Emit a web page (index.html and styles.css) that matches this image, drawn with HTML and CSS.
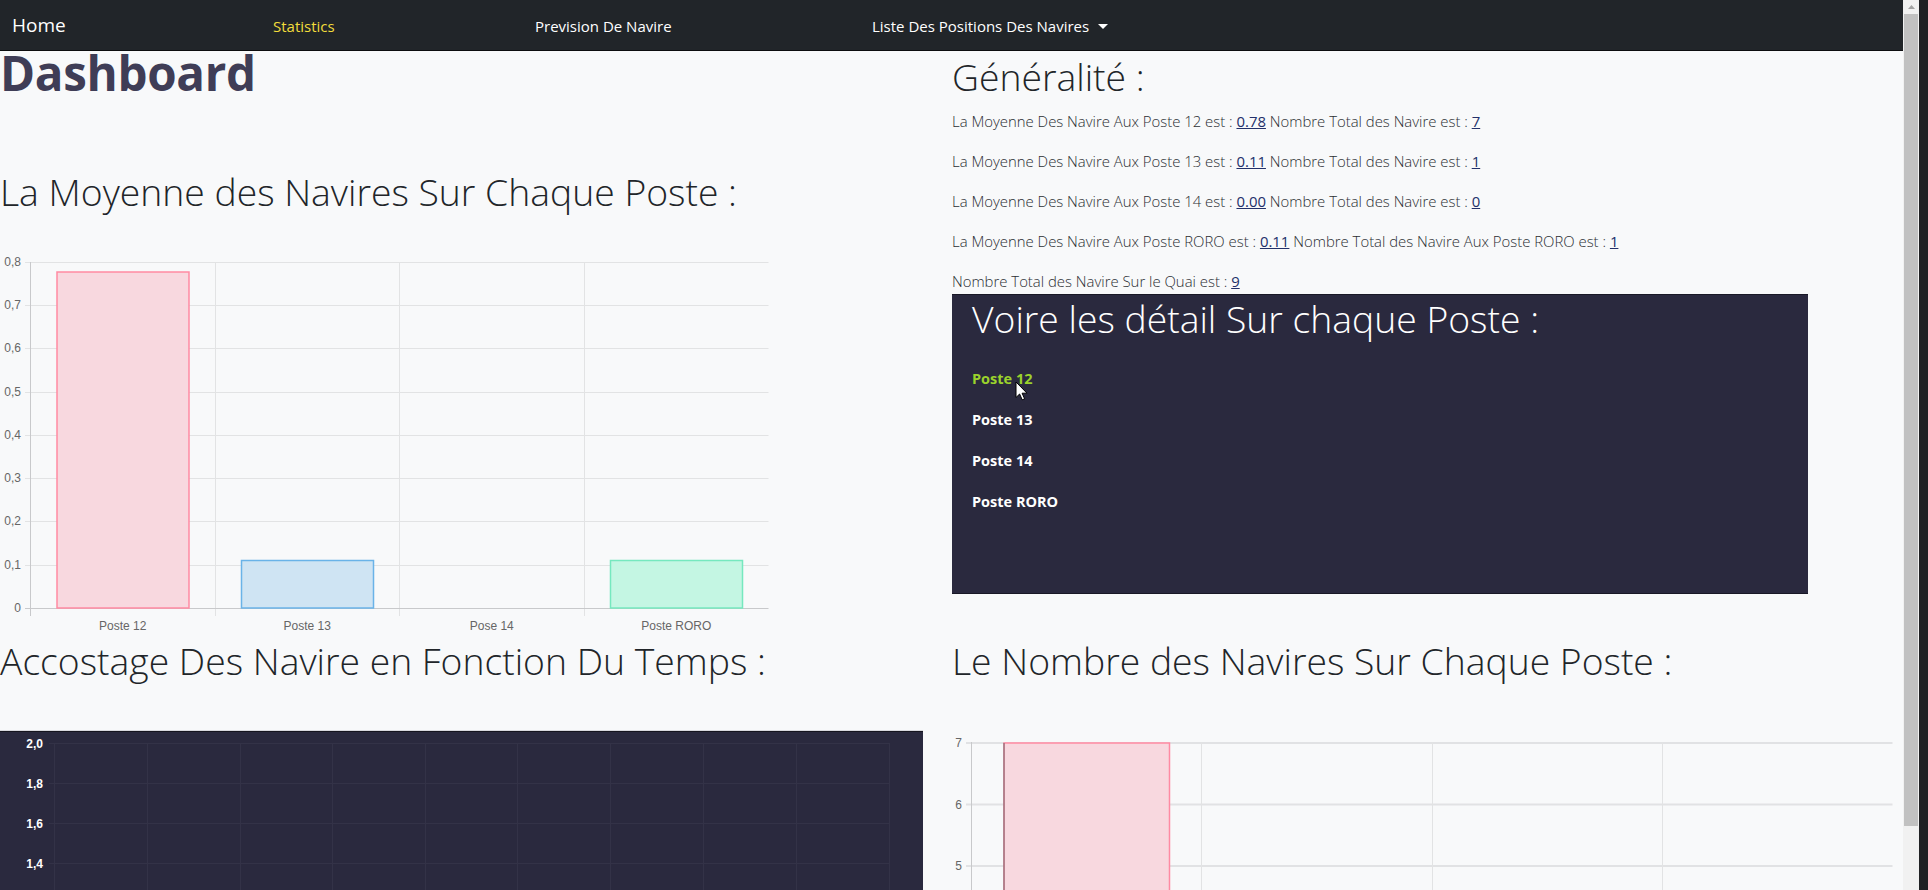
FILE: index.html
```html
<!DOCTYPE html>
<html lang="fr">
<head>
<meta charset="utf-8">
<title>Dashboard</title>
<link rel="stylesheet" href="styles.css">
</head>
<body>
<div class="window">
  <div class="page">
    <nav class="navbar">
      <a class="brand" href="#">Home</a>
      <a class="nav-link link-stats" href="#">Statistics</a>
      <a class="nav-link link-prev" href="#">Prevision De Navire</a>
      <a class="nav-link dropdown-toggle" href="#">Liste Des Positions Des Navires</a>
    </nav>

    <main class="dashboard">
      <section class="cell">
        <h1 class="page-title">Dashboard</h1>
        <h2 class="section-title moyenne-title">La Moyenne des Navires Sur Chaque Poste :</h2>
        <svg class="chart chart-moyenne" width="770" height="385" viewBox="0 0 770 385">
          <g class="grid">
            <line x1="25" y1="10.5" x2="768.5" y2="10.5"/>
            <line x1="25" y1="53.5" x2="768.5" y2="53.5"/>
            <line x1="25" y1="96.5" x2="768.5" y2="96.5"/>
            <line x1="25" y1="140.5" x2="768.5" y2="140.5"/>
            <line x1="25" y1="183.5" x2="768.5" y2="183.5"/>
            <line x1="25" y1="226.5" x2="768.5" y2="226.5"/>
            <line x1="25" y1="269.5" x2="768.5" y2="269.5"/>
            <line x1="25" y1="313.5" x2="768.5" y2="313.5"/>
            <line x1="215.5" y1="10" x2="215.5" y2="364"/>
            <line x1="399.5" y1="10" x2="399.5" y2="364"/>
            <line x1="584.5" y1="10" x2="584.5" y2="364"/>
          </g>
          <g class="axis">
            <line x1="25" y1="356.5" x2="768.5" y2="356.5"/>
            <line x1="30.5" y1="10" x2="30.5" y2="364"/>
          </g>
          <g class="ticks">
            <text x="21" y="14">0,8</text>
            <text x="21" y="57">0,7</text>
            <text x="21" y="100">0,6</text>
            <text x="21" y="144">0,5</text>
            <text x="21" y="187">0,4</text>
            <text x="21" y="230">0,3</text>
            <text x="21" y="273">0,2</text>
            <text x="21" y="317">0,1</text>
            <text x="21" y="360">0</text>
          </g>
          <rect class="bar bar-pink" x="57" y="20" width="132" height="336"/>
          <rect class="bar bar-blue" x="241.5" y="308.5" width="132" height="47.5"/>
          <rect class="bar bar-green" x="610.5" y="308.5" width="132" height="47.5"/>
          <g class="labels">
            <text x="122.75" y="378">Poste 12</text>
            <text x="307.25" y="378">Poste 13</text>
            <text x="491.75" y="378">Pose 14</text>
            <text x="676.25" y="378">Poste RORO</text>
          </g>
        </svg>
      </section>

      <section class="cell">
        <h2 class="section-title general-title">Généralité :</h2>
        <p class="stat">La Moyenne Des Navire Aux Poste 12 est : <a href="#">0.78</a> Nombre Total des Navire est : <a href="#">7</a></p>
        <p class="stat">La Moyenne Des Navire Aux Poste 13 est : <a href="#">0.11</a> Nombre Total des Navire est : <a href="#">1</a></p>
        <p class="stat">La Moyenne Des Navire Aux Poste 14 est : <a href="#">0.00</a> Nombre Total des Navire est : <a href="#">0</a></p>
        <p class="stat">La Moyenne Des Navire Aux Poste RORO est : <a href="#">0.11</a> Nombre Total des Navire Aux Poste RORO est : <a href="#">1</a></p>
        <p class="stat stat-last">Nombre Total des Navire Sur le Quai est : <a href="#">9</a></p>
        <div class="detail-box">
          <h2 class="section-title detail-title">Voire les détail Sur chaque Poste :</h2>
          <ul class="poste-list">
            <li><a class="poste-link is-hover" href="#">Poste 12</a></li>
            <li><a class="poste-link" href="#">Poste 13</a></li>
            <li><a class="poste-link" href="#">Poste 14</a></li>
            <li><a class="poste-link" href="#">Poste RORO</a></li>
          </ul>
          <svg class="cursor" width="14" height="21" viewBox="0 0 14 21">
            <path d="M1 1 L1 16.5 L4.6 13 L7.2 18.8 L9.6 17.8 L7.1 12.2 L12 12.2 Z" fill="#fff" stroke="#000" stroke-width="1" stroke-linejoin="round"/>
          </svg>
        </div>
      </section>

      <section class="cell">
        <h2 class="section-title bottom-title">Accostage Des Navire en Fonction Du Temps :</h2>
        <div class="dark-chart">
          <svg class="chart" width="923" height="170" viewBox="0 0 923 170">
            <g class="dark-grid">
              <line x1="49" y1="11.5" x2="889.5" y2="11.5"/>
              <line x1="49" y1="51.5" x2="889.5" y2="51.5"/>
              <line x1="49" y1="91.5" x2="889.5" y2="91.5"/>
              <line x1="49" y1="131.5" x2="889.5" y2="131.5"/>
              <line x1="54.5" y1="11" x2="54.5" y2="170"/>
              <line x1="147.5" y1="11" x2="147.5" y2="170"/>
              <line x1="240.5" y1="11" x2="240.5" y2="170"/>
              <line x1="332.5" y1="11" x2="332.5" y2="170"/>
              <line x1="425.5" y1="11" x2="425.5" y2="170"/>
              <line x1="517.5" y1="11" x2="517.5" y2="170"/>
              <line x1="610.5" y1="11" x2="610.5" y2="170"/>
              <line x1="703.5" y1="11" x2="703.5" y2="170"/>
              <line x1="796.5" y1="11" x2="796.5" y2="170"/>
              <line x1="889.5" y1="11" x2="889.5" y2="170"/>
            </g>
            <g class="dark-ticks">
              <text x="43" y="15.5">2,0</text>
              <text x="43" y="55.5">1,8</text>
              <text x="43" y="95.5">1,6</text>
              <text x="43" y="135.5">1,4</text>
            </g>
          </svg>
        </div>
      </section>

      <section class="cell">
        <h2 class="section-title bottom-title">Le Nombre des Navires Sur Chaque Poste :</h2>
        <svg class="chart chart-nombre" width="951" height="160" viewBox="0 0 951 160">
          <g class="grid-thick">
            <line x1="14" y1="12" x2="940.5" y2="12"/>
            <line x1="14" y1="73.5" x2="940.5" y2="73.5"/>
            <line x1="14" y1="135" x2="940.5" y2="135"/>
          </g>
          <g class="grid">
            <line x1="249.5" y1="11" x2="249.5" y2="160"/>
            <line x1="480.5" y1="11" x2="480.5" y2="160"/>
            <line x1="710.5" y1="11" x2="710.5" y2="160"/>
          </g>
          <g class="axis">
            <line x1="19.5" y1="11" x2="19.5" y2="160"/>
          </g>
          <rect class="bar bar-pink" x="52" y="12" width="165.5" height="160"/>
          <line class="bar-edge" x1="52" y1="12" x2="52" y2="160"/>
          <g class="ticks">
            <text x="10" y="16">7</text>
            <text x="10" y="77.5">6</text>
            <text x="10" y="139">5</text>
          </g>
        </svg>
      </section>
    </main>
  </div>
  <div class="scrollbar">
    <div class="scroll-arrow">
      <svg width="7" height="4" viewBox="0 0 7 4"><path d="M0 4 L3.5 0 L7 4 Z" fill="#a3a3a3"/></svg>
    </div>
    <div class="scroll-thumb"></div>
  </div>
  <div class="window-edge"></div>
</div>
</body>
</html>
```

FILE: styles.css
```css
* {
  box-sizing: border-box;
}

html,
body {
  margin: 0;
  padding: 0;
}

body {
  background: #f8f9fa;
  color: #212529;
  font-family: "Open Sans", "Noto Sans", sans-serif;
  overflow: hidden;
}

.window {
  display: flex;
  width: 1928px;
  height: 890px;
  overflow: hidden;
}

.page {
  flex: none;
  width: 1903px;
  height: 890px;
  overflow: hidden;
}

/* ---------- navbar ---------- */
.navbar {
  display: flex;
  align-items: center;
  height: 51px;
  background: #212529;
  border-bottom: 1px solid #0c0d0f;
}

.brand {
  flex: none;
  width: 273px;
  padding-left: 12px;
  font-size: 19px;
  color: #fff;
  text-decoration: none;
}

.nav-link {
  flex: none;
  font-size: 15px;
  color: #fff;
  text-decoration: none;
  padding-top: 1px;
}

.link-stats {
  width: 262px;
  color: #f3dd3b;
}

.link-prev {
  width: 337px;
}

.dropdown-toggle::after {
  content: "";
  display: inline-block;
  margin-left: 9px;
  vertical-align: 3px;
  border-top: 5px solid #fff;
  border-left: 5px solid transparent;
  border-right: 5px solid transparent;
}

/* ---------- layout ---------- */
.dashboard {
  display: grid;
  grid-template-columns: 952px 951px;
}

.cell {
  min-width: 0;
}

.page-title {
  margin: 0;
  font-size: 47.5px;
  font-weight: 700;
  line-height: 42px;
  color: #3f3d56;
  letter-spacing: -0.3px;
  padding-top: 1px;
}

.section-title {
  margin: 0;
  font-size: 37.3px;
  font-weight: 300;
  line-height: 48px;
  color: #212529;
  white-space: nowrap;
}

.moyenne-title {
  margin-top: 74px;
}

.chart {
  display: block;
}

.chart-moyenne {
  margin-top: 36px;
}

.general-title {
  margin: 2px 0 8px;
}

.stat {
  margin: 0 0 16px;
  font-size: 14.9px;
  font-weight: 300;
  line-height: 24px;
  color: #2b2e33;
  white-space: nowrap;
}

.stat a {
  color: #22306a;
  font-weight: 400;
  text-decoration: underline;
}

.stat-last {
  margin-bottom: 1px;
}

/* ---------- detail box ---------- */
.detail-box {
  position: relative;
  width: 856px;
  height: 300px;
  padding: 0 20px;
  background: #2a293e;
  border-top: 1px solid #191826;
  border-bottom: 1px solid #191826;
}

.detail-title {
  margin-top: 0;
  color: #fff;
}

.poste-list {
  list-style: none;
  margin: 24px 0 0;
  padding: 0;
}

.poste-list li {
  font-size: 14.5px;
  line-height: 24px;
  margin-bottom: 17px;
}

.poste-link {
  font-size: 14.5px;
  font-weight: 700;
  color: #fff;
  text-decoration: none;
}

.poste-link.is-hover {
  color: #9bd22c;
}

.cursor {
  position: absolute;
  left: 63px;
  top: 86px;
}

/* ---------- bottom row ---------- */
.bottom-title {
  margin-bottom: 46px;
}

.dark-chart {
  width: 923px;
  height: 160px;
  background: #2a293e;
  border-top: 1px solid #16151f;
  box-shadow: 0 -1px 0 #d9d9de;
}

/* ---------- svg chart styling ---------- */
.grid line {
  stroke: #e2e3e4;
  stroke-width: 1;
}

.grid-thick line {
  stroke: #e1e2e4;
  stroke-width: 2;
}

.axis line {
  stroke: #c8c9cb;
  stroke-width: 1;
}

.ticks text {
  font-family: "Liberation Sans", Arial, sans-serif;
  font-size: 12px;
  fill: #666;
  text-anchor: end;
}

.labels text {
  font-family: "Liberation Sans", Arial, sans-serif;
  font-size: 12px;
  fill: #666;
  text-anchor: middle;
}

.bar {
  stroke-width: 1.5;
}

.bar-pink {
  fill: #f8d8df;
  stroke: #ff8aa3;
}

.bar-blue {
  fill: #cfe4f3;
  stroke: #6ab3e8;
}

.bar-green {
  fill: #c4f6e3;
  stroke: #76e8bf;
}

.bar-edge {
  stroke: #6d6166;
  stroke-width: 1;
}

.dark-grid line {
  stroke: #333247;
  stroke-width: 1;
}

.dark-ticks text {
  font-family: "Liberation Sans", Arial, sans-serif;
  font-size: 12px;
  font-weight: 700;
  fill: #fff;
  text-anchor: end;
}

/* ---------- fake window scrollbar ---------- */
.scrollbar {
  flex: none;
  width: 16px;
  height: 890px;
  background: #f1f1f1;
  display: flex;
  flex-direction: column;
  align-items: center;
}

.scroll-arrow {
  height: 14px;
  width: 16px;
  display: flex;
  align-items: center;
  justify-content: center;
}

.scroll-thumb {
  width: 14px;
  height: 812px;
  background: #c1c1c1;
}

.window-edge {
  flex: 1;
  height: 890px;
  background: #202124;
}
```
